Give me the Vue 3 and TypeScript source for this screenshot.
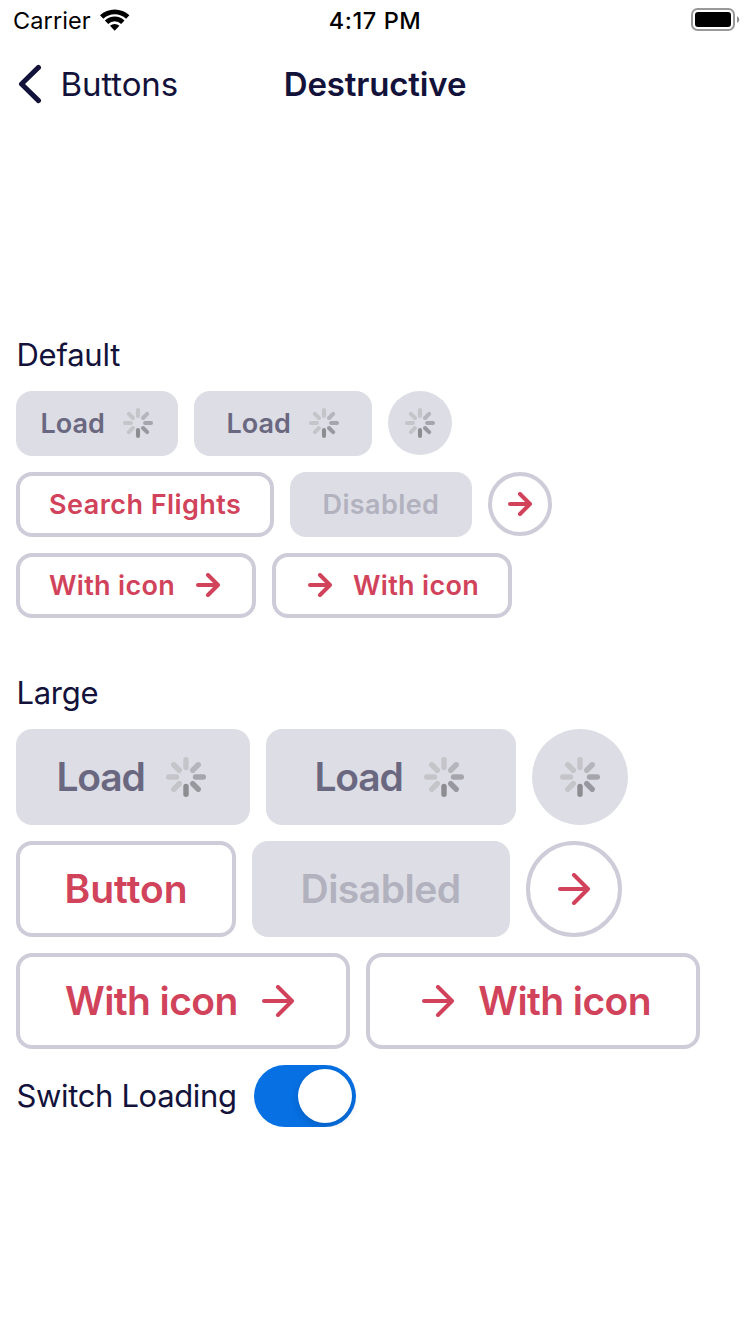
<script setup lang="ts">
import { ref } from 'vue'

type Kind = 'loading' | 'outline' | 'disabled'
interface Item {
  id: string
  kind: Kind
  label?: string
  icon?: 'start' | 'end' | 'only'
  shape: string
}
interface Section {
  title: string
  size: 'small' | 'large'
  rows: Item[][]
}

const loading = ref(true)

const sections: Section[] = [
  {
    title: 'Default',
    size: 'small',
    rows: [
      [
        { id: 's1', kind: 'loading', label: 'Load', shape: 'load-a' },
        { id: 's2', kind: 'loading', label: 'Load', shape: 'load-b' },
        { id: 's3', kind: 'loading', shape: 'round' },
      ],
      [
        { id: 's4', kind: 'outline', label: 'Search Flights', shape: 'text' },
        { id: 's5', kind: 'disabled', label: 'Disabled', shape: 'off' },
        { id: 's6', kind: 'outline', icon: 'only', shape: 'round' },
      ],
      [
        { id: 's7', kind: 'outline', label: 'With icon', icon: 'end', shape: 'icon' },
        { id: 's8', kind: 'outline', label: 'With icon', icon: 'start', shape: 'icon' },
      ],
    ],
  },
  {
    title: 'Large',
    size: 'large',
    rows: [
      [
        { id: 'l1', kind: 'loading', label: 'Load', shape: 'load-a' },
        { id: 'l2', kind: 'loading', label: 'Load', shape: 'load-b' },
        { id: 'l3', kind: 'loading', shape: 'round' },
      ],
      [
        { id: 'l4', kind: 'outline', label: 'Button', shape: 'text' },
        { id: 'l5', kind: 'disabled', label: 'Disabled', shape: 'off' },
        { id: 'l6', kind: 'outline', icon: 'only', shape: 'round' },
      ],
      [
        { id: 'l7', kind: 'outline', label: 'With icon', icon: 'end', shape: 'icon' },
        { id: 'l8', kind: 'outline', label: 'With icon', icon: 'start', shape: 'icon' },
      ],
    ],
  },
]

const spokes = ['#c4c4c9', '#b5b5bc', '#a5a5ab', '#98989f', '#8c8c91', '#c4c4c9', '#c4c4c9', '#c4c4c9']
</script>

<template>
  <div class="screen">
    <header class="status">
      <div class="carrier">
        <span class="carrier-name">Carrier</span>
        <svg class="wifi" viewBox="0 0 30 22" width="30" height="22">
          <path d="M0 6.200 A21.500 21.500 0 0 1 29.400 6.200 L26.100 9.700 A16.500 16.500 0 0 0 3.300 9.700 Z" />
          <path d="M4.900 11.500 A14 14 0 0 1 24.500 11.500 L21.200 14.900 A9.400 9.400 0 0 0 8.200 14.900 Z" />
          <path d="M10 16.700 A7 7 0 0 1 19.400 16.700 L14.700 21.700 Z" />
        </svg>
      </div>
      <span class="time">4:17 PM</span>
      <svg class="battery" viewBox="0 0 50 24" width="50" height="24">
        <rect x="1" y="1" width="42" height="21" rx="5.5" fill="none" stroke="#999" stroke-width="2" />
        <rect x="4" y="4" width="36" height="15" rx="3" />
        <path d="M46 8 Q48.300 9.500 48.300 11.500 T46 15 Z" fill="#8f8f8f" />
      </svg>
    </header>

    <nav class="nav">
      <a class="back">
        <svg class="chevron" viewBox="0 0 24 40" width="24" height="40">
          <path d="M20.500 3.400 L3.500 20 L20.500 36.600" fill="none" stroke="currentColor" stroke-width="5" stroke-linecap="round" stroke-linejoin="round" />
        </svg>
        <span class="back-label">Buttons</span>
      </a>
      <h1 class="title">Destructive</h1>
    </nav>

    <main class="content">
      <section v-for="section in sections" :key="section.title" :class="['section', section.size]">
        <h2 class="heading"><span :class="'heading-' + section.size">{{ section.title }}</span></h2>
        <div v-for="(row, index) in section.rows" :key="index" class="row">
          <button
            v-for="item in row"
            :key="item.id"
            :class="['btn', item.kind, item.shape, item.icon ? 'icon-' + item.icon : '']"
            :disabled="item.kind === 'disabled'"
          >
            <span v-if="item.label" class="label">{{ item.label }}</span>
            <svg v-if="item.kind === 'loading'" class="spinner" viewBox="0 0 40 40">
              <rect
                v-for="(color, n) in spokes"
                :key="n"
                x="17.3"
                y="0"
                width="5.4"
                height="13.2"
                rx="2.7"
                :fill="color"
                :transform="`rotate(${n * 45} 20 20)`"
              />
            </svg>
            <svg v-else-if="item.icon && section.size === 'small'" class="arrow" viewBox="0 0 24 24">
              <path d="M2 12 H22 M12 2 L22 12 L12 22" />
            </svg>
            <svg v-else-if="item.icon" class="arrow" viewBox="0 0 32 32">
              <path d="M2 16 H30 M16 2 L30 16 L16 30" />
            </svg>
          </button>
        </div>
      </section>

      <div class="switch-row">
        <span class="switch-label">Switch Loading</span>
        <button :class="['switch', { on: loading }]" role="switch" :aria-checked="loading" @click="loading = !loading">
          <span class="knob"></span>
        </button>
      </div>
    </main>
  </div>
</template>

<style>
body {
  background: #fff;
}
</style>

<style scoped>
.screen {
  box-sizing: border-box;
  width: 750px;
  height: 1334px;
  overflow: hidden;
  background: #fff;
  color: #13123a;
  font-family: Inter, "Liberation Sans", sans-serif;
}
.status {
  display: grid;
  grid-template-columns: 1fr auto 1fr;
  align-items: center;
  height: 40px;
  color: #000;
}
.carrier {
  display: flex;
  align-items: center;
  padding-left: 13px;
}
.carrier-name {
  width: 87px;
  font-size: 23.5px;
  letter-spacing: 0.1px;
}
.time {
  font-size: 23.5px;
  font-weight: 500;
  letter-spacing: 0.6px;
}
.battery {
  justify-self: end;
  margin-right: 9px;
}
.nav {
  display: grid;
  grid-template-columns: 1fr auto 1fr;
  align-items: center;
  height: 88px;
}
.back {
  display: flex;
  align-items: center;
  padding-left: 18px;
}
.chevron {
  flex: none;
  margin-right: 18.5px;
}
.back-label {
  font-size: 33px;
  letter-spacing: -0.1px;
}
.title {
  margin: 0;
  font-size: 33px;
  font-weight: 600;
  letter-spacing: -0.15px;
}
.content {
  padding: 207px 16px 0;
}
.section {
  margin-bottom: 55px;
}
.section.large {
  margin-bottom: 16px;
}
.heading {
  height: 40px;
  margin: 0 0 16px;
  padding-left: 0.5px;
  font-size: 31px;
  font-weight: 400;
  line-height: 40px;
}
.heading-small {
  letter-spacing: -0.25px;
}
.heading-large {
  letter-spacing: -0.3px;
}
.row {
  display: flex;
  align-items: flex-start;
  gap: 16px;
}
.row + .row {
  margin-top: 16px;
}
.btn {
  display: flex;
  box-sizing: border-box;
  flex: none;
  align-items: center;
  justify-content: space-between;
  border: 0 solid #cdccd8;
  border-radius: 16px;
  background: #dddde5;
  color: #6a6880;
  font-family: inherit;
  font-weight: 600;
  white-space: nowrap;
}
.outline {
  border-width: 4px;
  background: #fff;
  color: #d1435b;
}
.disabled {
  color: #b2b1be;
}
.btn.round {
  justify-content: center;
  padding: 0;
  border-radius: 50%;
}
.icon-start {
  flex-direction: row-reverse;
}
.arrow {
  flex: none;
}
.arrow path {
  fill: none;
  stroke: currentColor;
  stroke-width: 4;
  stroke-linecap: round;
  stroke-linejoin: round;
}

.small .btn {
  height: 65px;
  font-size: 27px;
}
.small .btn.round {
  width: 64px;
  height: 64px;
}
.small .spinner {
  width: 30px;
  height: 30px;
}
.small .arrow {
  width: 24px;
  height: 24px;
}
.small .label + svg {
  margin-bottom: 1px;
}
.small .load-a {
  width: 162px;
  padding: 0 25px 0 24.5px;
}
.small .load-b {
  width: 178px;
  padding: 0 33px 0 32.5px;
}
.small .text {
  width: 258px;
  padding: 0 0 0 29px;
  letter-spacing: 0.45px;
}
.small .off {
  width: 182px;
  padding: 0 0 0 32.5px;
  letter-spacing: 0.4px;
}
.small .icon {
  width: 240px;
  padding: 0 32px 0 29px;
  letter-spacing: 0.3px;
}
.small .icon-start {
  padding: 0 29px 0 32px;
}

.large .btn {
  height: 96px;
  font-size: 39px;
}
.large .round {
  width: 96px;
}
.large .spinner {
  width: 40px;
  height: 40px;
}
.large .arrow {
  width: 32px;
  height: 32px;
}
.large .label {
  margin-bottom: 1px;
}
.large .load-a {
  width: 234px;
  padding: 0 44px 0 40.5px;
  letter-spacing: -1.2px;
}
.large .load-b {
  width: 250px;
  padding: 0 52px 0 48.5px;
  letter-spacing: -1.2px;
}
.large .text {
  width: 220px;
  padding: 0 0 0 44.5px;
  letter-spacing: 0;
}
.large .off {
  width: 258px;
  padding: 0 0 0 48.5px;
  letter-spacing: -0.5px;
}
.large .icon {
  width: 334px;
  padding: 0 52px 0 45px;
  letter-spacing: -0.6px;
}
.large .icon-start {
  padding: 0 45px 0 52px;
}

.switch-row {
  display: flex;
  align-items: center;
}
.switch-label {
  width: 237.5px;
  margin-bottom: 2px;
  padding-left: 0.5px;
  font-size: 31px;
  letter-spacing: -0.35px;
  white-space: nowrap;
}
.switch {
  display: flex;
  box-sizing: border-box;
  width: 102px;
  height: 62px;
  padding: 4px;
  border: 0;
  border-radius: 31px;
  background: #b9b8c6;
}
.switch.on {
  justify-content: flex-end;
  background: #0770e3;
}
.knob {
  width: 54px;
  height: 54px;
  border-radius: 50%;
  background: #fff;
  box-shadow: 0 3px 8px rgba(0, 0, 0, 0.15);
  clip-path: inset(-4px -4px -4px -12px);
}
</style>
